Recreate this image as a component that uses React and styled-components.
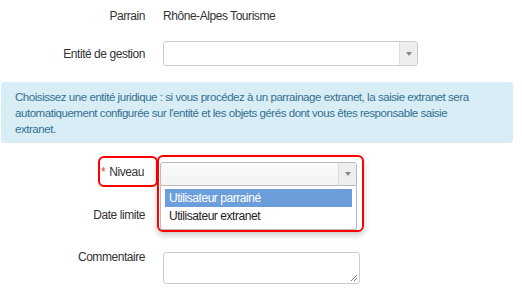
import React from 'react';
import styled, { createGlobalStyle } from 'styled-components';

const GlobalStyle = createGlobalStyle`
  body {
    margin: 0;
    background: #fff;
    font-family: "Liberation Sans", Arial, sans-serif;
    font-size: 12px;
    letter-spacing: -0.45px;
    color: #333;
  }
`;

const Page = styled.div`
  width: 522px;
  height: 298px;
  overflow: hidden;
  display: flex;
  flex-direction: column;
`;

const Row = styled.div`
  display: flex;
  align-items: ${p => (p.$top ? 'flex-start' : 'center')};
  height: ${p => p.$h}px;
  margin-top: ${p => p.$mt || 0}px;
  position: relative;
  z-index: ${p => p.$z || 'auto'};
`;

const Label = styled.div`
  width: 145px;
  padding-right: 18px;
  text-align: right;
  line-height: 16px;
  margin-top: ${p => p.$mt || 0}px;
  flex-shrink: 0;
`;

const Value = styled.div`
  line-height: 16px;
`;

const SelectBox = styled.div`
  position: relative;
  display: flex;
  width: ${p => p.$w}px;
  height: ${p => p.$h}px;
  box-sizing: border-box;
  border: 1px solid #ccc;
  border-radius: 3px;
  background: ${p => (p.$open ? 'linear-gradient(#fafafa, #f3f3f3)' : '#fff')};
  ${p => p.$open && 'border-color: #bbb; border-radius: 3px 3px 0 0;'}
`;

const SelectValue = styled.div`
  flex: 1;
`;

const ArrowCell = styled.div`
  width: 17px;
  border-left: 1px solid #ddd;
  background: #eee;
  display: flex;
  align-items: center;
  justify-content: center;
  border-radius: 0 3px 3px 0;
`;

const Caret = styled.span`
  width: 0;
  height: 0;
  border-left: 3px solid transparent;
  border-right: 3px solid transparent;
  border-top: 4px solid #888;
`;

const Alert = styled.div`
  margin: 16px 9px 0 1px;
  padding: 7px 40px 6px 14px;
  background: #d9edf7;
  color: #31708f;
  border-radius: 3px;
  font-size: 11.5px;
  line-height: 16px;
`;

const Marked = styled.div`
  border: 2px solid #f00;
  border-radius: 6px;
`;

const MarkedLabel = styled(Marked)`
  margin-left: 98px;
  margin-right: 2px;
  width: 60px;
  height: 31px;
  box-sizing: border-box;
  display: flex;
  align-items: center;
  justify-content: flex-end;
  padding-right: 12px;
  margin-top: -6px;
  align-self: flex-start;
`;

const Required = styled.span`
  color: #e33;
  margin-right: 4px;
`;

const ControlCell = styled.div`
  position: relative;
  align-self: flex-start;
`;

const MarkedControl = styled(Marked)`
  position: absolute;
  left: -3px;
  top: -7px;
  width: 207px;
  height: 77px;
  box-sizing: border-box;
  pointer-events: none;
  box-shadow: 0 3px 6px rgba(0, 0, 0, 0.22);
`;

const Menu = styled.ul`
  position: absolute;
  left: 0;
  top: 24px;
  width: 197px;
  box-sizing: border-box;
  margin: 0;
  padding: 3px 4px 4px 4px;
  list-style: none;
  background: #fff;
  border: 1px solid #bbb;
  border-top: none;
  border-radius: 0 0 3px 3px;
`;

const MenuItem = styled.li`
  height: 18px;
  line-height: 18px;
  padding-left: 4px;
  background: ${p => (p.$active ? '#6d9edc' : 'transparent')};
  color: ${p => (p.$active ? '#fff' : '#222')};
`;

const TextArea = styled.div`
  width: 197px;
  height: 32px;
  box-sizing: border-box;
  border: 1px solid #ccc;
  border-radius: 3px;
  position: relative;
`;

const Grip = styled.svg`
  position: absolute;
  right: 1px;
  bottom: 1px;
`;

function Select({ width, height, open }) {
  return (
    <SelectBox $w={width} $h={height} $open={open}>
      <SelectValue />
      <ArrowCell>
        <Caret />
      </ArrowCell>
    </SelectBox>
  );
}

export default function App() {
  return (
    <Page>
      <GlobalStyle />
      <Row $h={32}>
        <Label>Parrain</Label>
        <Value>Rhône-Alpes Tourisme</Value>
      </Row>
      <Row $h={25} $mt={9}>
        <Label>Entité de gestion</Label>
        <Select width={255} height={25} />
      </Row>
      <Alert>
        Choisissez une entité juridique : si vous procédez à un parrainage extranet, la saisie extranet sera
        automatiquement configurée sur l'entité et les objets gérés dont vous êtes responsable saisie
        extranet.
      </Alert>
      <Row $h={24} $mt={19} $z={2}>
        <MarkedLabel>
          <Required>*</Required>Niveau
        </MarkedLabel>
        <ControlCell>
          <Select width={197} height={24} open />
          <Menu>
            <MenuItem $active>Utilisateur parrainé</MenuItem>
            <MenuItem>Utilisateur extranet</MenuItem>
          </Menu>
          <MarkedControl />
        </ControlCell>
      </Row>
      <Row $h={24} $mt={17}>
        <Label>Date limite</Label>
      </Row>
      <Row $h={32} $mt={25} $top>
        <Label $mt={-3}>Commentaire</Label>
        <TextArea>
          <Grip width="8" height="8" viewBox="0 0 8 8">
            <path d="M7 1 L1 7 M7 4 L4 7" stroke="#777" strokeWidth="1" fill="none" />
          </Grip>
        </TextArea>
      </Row>
    </Page>
  );
}
